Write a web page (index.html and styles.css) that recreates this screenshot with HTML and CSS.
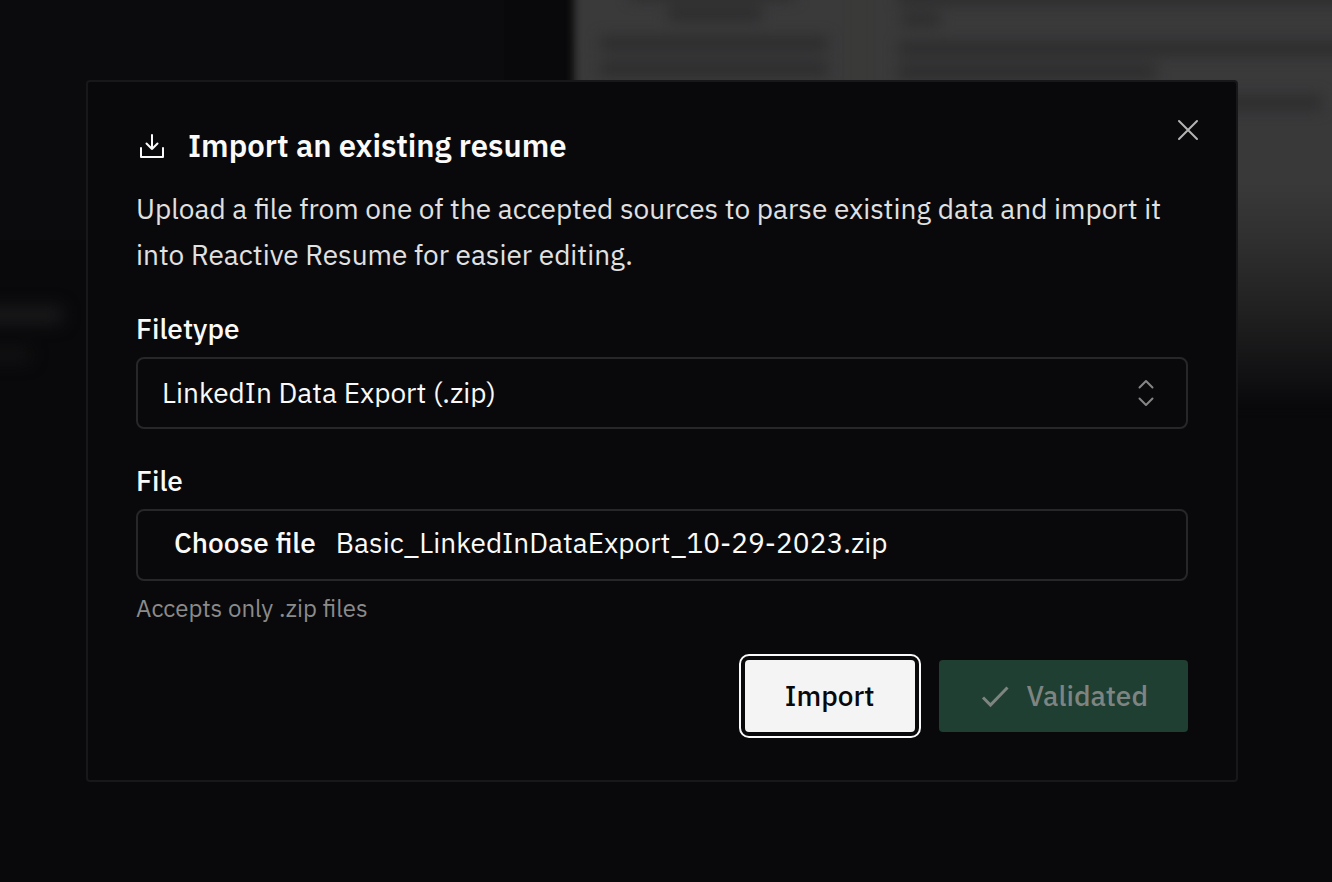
FILE: index.html
```html
<!DOCTYPE html>
<html lang="en">
<head>
<meta charset="utf-8">
<meta name="viewport" content="width=device-width, initial-scale=1">
<title>Import an existing resume</title>
<link rel="stylesheet" href="styles.css">
</head>
<body>
<svg class="backdrop" viewBox="0 0 1332 882" preserveAspectRatio="xMidYMin slice" aria-hidden="true">
  <defs>
    <linearGradient id="fade" x1="0" y1="0" x2="0" y2="1">
      <stop offset="0" stop-color="#3b3b3c"/>
      <stop offset=".5" stop-color="#39393a"/>
      <stop offset=".62" stop-color="#303031"/>
      <stop offset=".8" stop-color="#1f1f20"/>
      <stop offset=".93" stop-color="#111113"/>
      <stop offset="1" stop-color="#09090b"/>
    </linearGradient>
    <filter id="edge" x="-10%" y="-10%" width="120%" height="120%" color-interpolation-filters="sRGB"><feGaussianBlur stdDeviation="4"/></filter>
    <filter id="text" x="-10%" y="-30%" width="120%" height="160%" color-interpolation-filters="sRGB"><feGaussianBlur stdDeviation="7"/></filter>
    <filter id="card" x="-20%" y="-100%" width="140%" height="300%" color-interpolation-filters="sRGB"><feGaussianBlur stdDeviation="8"/></filter>
  </defs>
  <rect x="-10" y="-10" width="514" height="250" fill="#0b0b0d"/>
  <rect x="574" y="-40" width="790" height="448" fill="url(#fade)" filter="url(#edge)"/>
  <rect x="845" y="-10" width="28" height="200" fill="#3a3a39" filter="url(#edge)"/>
  <g fill="#2d2d2e" filter="url(#text)">
    <rect x="630" y="-14" width="165" height="14"/>
    <rect x="668" y="6" width="94" height="15"/>
    <rect x="600" y="36" width="228" height="15"/>
    <rect x="600" y="61" width="228" height="15"/>
    <rect x="898" y="-9" width="460" height="14"/>
    <rect x="902" y="13" width="38" height="13"/>
    <rect x="898" y="41" width="460" height="15"/>
    <rect x="898" y="64" width="258" height="15"/>
    <rect x="1180" y="95" width="142" height="15"/>
  </g>
  <g filter="url(#card)">
    <rect x="-40" y="306" width="102" height="18" fill="#19191b"/>
    <rect x="-40" y="348" width="70" height="14" fill="#121214"/>
  </g>
</svg>

<main class="overlay">
  <form class="dialog" role="dialog" aria-labelledby="dialog-title" aria-describedby="dialog-description">
    <button class="close" type="button" aria-label="Close">
      <svg viewBox="0 0 32 32" class="icon"><path d="M7 7l18 18M25 7L7 25"/></svg>
    </button>

    <header class="heading">
      <svg viewBox="0 0 32 32" class="icon" aria-hidden="true"><path d="M5 18v9h22v-9M16 5v14M10.500 13.500l5.500 5.500 5.500-5.500"/></svg>
      <h1 class="title" id="dialog-title">Import an existing resume</h1>
    </header>
    <p class="description" id="dialog-description">Upload a file from one of the accepted sources to parse existing data and import it into Reactive Resume for easier editing.</p>

    <div class="field">
      <label class="label" for="filetype">Filetype</label>
      <div class="control">
        <select class="select" id="filetype">
          <option>LinkedIn Data Export (.zip)</option>
        </select>
        <svg viewBox="0 0 32 32" class="icon caret" aria-hidden="true"><path d="M9.500 10.500L16 4l6.500 6.500M9.500 21.500L16 28l6.500-6.500"/></svg>
      </div>
    </div>

    <div class="field">
      <label class="label" for="file">File</label>
      <div class="control">
        <input class="file-input" id="file" type="file" accept=".zip" aria-describedby="file-hint">
        <label class="file-face" for="file">
          <span class="file-choose">Choose file</span>
          <span class="file-name">Basic_LinkedInDataExport_10-29-2023.zip</span>
        </label>
      </div>
      <p class="hint" id="file-hint">Accepts only .zip files</p>
    </div>

    <footer class="actions">
      <button class="button primary" type="button">Import</button>
      <button class="button success" type="button" disabled>
        <svg viewBox="0 0 32 32" class="icon check" aria-hidden="true"><path d="M4 17.500L11.500 25 28.500 7.500"/></svg>
        Validated
      </button>
    </footer>
  </form>
</main>
</body>
</html>
```
FILE: styles.css
```css
* {
  box-sizing: border-box;
}

body {
  margin: 0;
  background: #09090b;
  color: #fafafa;
  font: 400 28px/1 "IBM Plex Sans", Roboto, sans-serif;
}

h1, p {
  margin: 0;
}

button, input, select {
  font: inherit;
  color: inherit;
}

.backdrop {
  position: fixed;
  inset: 0;
  width: 100%;
  height: 100%;
}

.overlay {
  position: relative;
  display: grid;
  align-items: center;
  min-height: 100vh;
  padding: 0 8px 20px 0;
}

.dialog {
  position: relative;
  width: 100%;
  max-width: 1152px;
  margin: 0 auto;
  padding: 48px;
  background: #09090b;
  border: 2px solid #18181b;
  border-radius: 4px;
}

.icon {
  width: 32px;
  height: 32px;
  flex: none;
  fill: none;
  stroke: currentColor;
  stroke-width: 2;
  stroke-linecap: round;
  stroke-linejoin: round;
}

.close {
  position: absolute;
  top: 32px;
  right: 32px;
  display: flex;
  padding: 0;
  background: none;
  border: 0;
  color: #b4b4b5;
}

.heading {
  display: flex;
  align-items: center;
  gap: 20px;
}

.title {
  font-size: 31px;
  line-height: 32px;
  font-weight: 600;
}

.description {
  margin: 24px 0 37px;
  line-height: 46px;
  color: #e1e1e2;
}

.field + .field {
  margin-top: 38px;
}

.label {
  display: block;
  margin-bottom: 14px;
  line-height: 28px;
  font-weight: 500;
}

.control {
  display: grid;
  align-items: center;
  height: 72px;
  border: 2px solid #27272a;
  border-radius: 8px;
}

.control > * {
  grid-area: 1 / 1;
}

.select {
  width: 100%;
  height: 100%;
  padding: 0 24px;
  appearance: none;
  background: transparent;
  border: 0;
}

.caret {
  justify-self: end;
  margin-right: 24px;
  color: #858586;
  pointer-events: none;
}

.file-input {
  width: 100%;
  height: 100%;
  opacity: 0;
}

.file-face {
  display: flex;
  gap: 20px;
  padding: 0 36px 4px;
}

.file-choose {
  font-weight: 500;
}

.hint {
  margin-top: 15px;
  font-size: 24px;
  line-height: 24px;
  color: #8b8b8c;
}

.actions {
  display: flex;
  justify-content: flex-end;
  gap: 24px;
  margin-top: 40px;
}

.button {
  display: flex;
  align-items: center;
  gap: 16px;
  height: 72px;
  padding: 0 40px;
  border: 0;
  border-radius: 4px;
  font-weight: 500;
}

.primary {
  background: #f4f4f5;
  color: #09090b;
  outline: 2px solid #fafafa;
  outline-offset: 4px;
}

.success {
  background: #1e3f31;
  color: #7e8481;
}

.check {
  stroke-width: 3;
  stroke-linecap: butt;
  stroke-linejoin: miter;
}
```
